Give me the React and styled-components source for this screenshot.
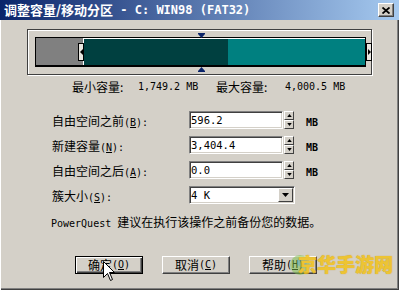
import React from "react";
import styled, { createGlobalStyle } from "styled-components";

const GlobalStyle = createGlobalStyle`
  html, body {
    margin: 0;
    padding: 0;
    background: #d4d0c8;
  }
  body {
    font-family: "Noto Sans CJK SC", sans-serif;
    font-size: 12px;
    color: #000;
  }
`;

const Window = styled.div`
  position: relative;
  width: 399px;
  height: 290px;
  overflow: hidden;
  box-sizing: border-box;
  background: #d4d0c8;
  box-shadow: inset 1px 0 0 #ffffff, inset -1px -1px 0 #404040,
    inset -2px -2px 0 #808080;
`;

const TitleBar = styled.div`
  height: 20px;
  display: flex;
  align-items: center;
  justify-content: space-between;
  padding: 0 5px 0 4px;
  background: linear-gradient(to right, #0a246a, #a6caf0);
  color: #fff;
  font-weight: bold;
  font-size: 13px;
  line-height: 20px;
`;

const Title = styled.div`
  display: flex;
  align-items: center;
  white-space: pre;
`;

const Mono = styled.span`
  font-family: "DejaVu Sans Mono", "Liberation Mono", monospace;
  font-size: ${(p) => p.$size || 10}px;
  font-weight: ${(p) => (p.$bold ? "bold" : "normal")};
`;

const U = styled.span`
  text-decoration: underline;
`;

const CloseButton = styled.div`
  width: 16px;
  height: 14px;
  box-sizing: border-box;
  background: #d4d0c8;
  border: 1px solid;
  border-color: #fff #404040 #404040 #fff;
  box-shadow: inset -1px -1px 0 #808080;
  display: flex;
  align-items: center;
  justify-content: center;
`;

const Frame = styled.div`
  position: relative;
  margin: 9px 0 0 27px;
  width: 345px;
  height: 46px;
  box-sizing: border-box;
  border: 1px solid #404040;
  box-shadow: 1px 1px 0 #fff, inset 1px 1px 0 #fff;
  padding: 7px 0 0 7px;
`;

const Bar = styled.div`
  display: flex;
  width: 331px;
  height: 30px;
  box-sizing: border-box;
  border: 1px solid #000;
  border-bottom-width: 2px;
`;

const FreeSeg = styled.div`
  width: 47px;
  background: #808080;
`;

const PartSeg = styled.div`
  flex: 1;
  display: flex;
  border-top: 1px solid #fff;
  border-left: 1px solid #fff;
`;

const Fill = styled.div`
  width: ${(p) => (p.$w ? `${p.$w}px` : "auto")};
  flex: ${(p) => (p.$w ? "none" : 1)};
  background: ${(p) => p.$color};
`;

const Handle = styled.div`
  position: absolute;
  top: 13px;
  left: ${(p) => p.$left}px;
  width: 6px;
  height: 18px;
  box-sizing: border-box;
  border: 1px solid #000;
  background: #e8e6e0;
  display: flex;
  align-items: center;
  justify-content: center;
`;

const Marker = styled.svg`
  position: absolute;
  left: 170px;
  top: ${(p) => p.$top}px;
`;

const StatRow = styled.div`
  display: flex;
  margin-top: 6px;
  padding-left: 72px;
  line-height: 12px;
  height: 12px;
`;

const Stat = styled.div`
  display: flex;
  align-items: center;
  width: 144px;
`;

const StatLabel = styled.span`
  width: ${(p) => p.$w}px;
`;

const FormGrid = styled.div`
  display: grid;
  margin-top: 18px;
  padding-left: 52px;
  grid-template-columns: 137px 94px 12px 1fr;
  grid-auto-rows: 18px;
  row-gap: 7px;
  align-items: center;
`;

const Label = styled.div`
  line-height: 12px;
  padding-top: 3px;
`;

const Field = styled.div`
  grid-column: ${(p) => p.$span || "auto"};
  height: 18px;
  box-sizing: border-box;
  background: #fff;
  border: 1px solid;
  border-color: #808080 #fff #fff #808080;
  box-shadow: inset 1px 1px 0 #404040, inset -1px -1px 0 #d4d0c8;
  padding: 0 0 0 1px;
  display: flex;
  align-items: center;
  justify-content: space-between;
  font-family: "DejaVu Sans Mono", "Liberation Mono", monospace;
  font-size: 10.5px;
`;

const Spinner = styled.div`
  margin-left: 1px;
  width: 10px;
  height: 18px;
  display: flex;
  flex-direction: column;
`;

const SpinBtn = styled.div`
  height: 9px;
  box-sizing: border-box;
  background: #d4d0c8;
  border: 1px solid;
  border-color: #fff #404040 #404040 #fff;
  display: flex;
  align-items: center;
  justify-content: center;
`;

const Unit = styled.div`
  margin-left: 11px;
  align-self: end;
  font-family: "DejaVu Sans Mono", "Liberation Mono", monospace;
  font-size: 10px;
  font-weight: bold;
  line-height: 12px;
`;

const DropBtn = styled.div`
  width: 15px;
  height: 14px;
  margin-right: 1px;
  box-sizing: border-box;
  background: #d4d0c8;
  border: 1px solid;
  border-color: #fff #404040 #404040 #fff;
  display: flex;
  align-items: center;
  justify-content: center;
`;

const Hint = styled.div`
  margin-top: 12px;
  padding-left: 51px;
  line-height: 12px;
`;

const ButtonRow = styled.div`
  display: flex;
  gap: 19px;
  margin-top: 26px;
  padding-left: 75px;
`;

const Button = styled.div`
  width: 68px;
  height: 18px;
  box-sizing: border-box;
  background: #d4d0c8;
  border: 1px solid;
  border-color: ${(p) => (p.$default ? "#000" : "#fff #404040 #404040 #fff")};
  box-shadow: ${(p) =>
    p.$default
      ? "inset 1px 1px 0 #fff, inset -1px -1px 0 #404040, inset -2px -2px 0 #808080"
      : "inset -1px -1px 0 #808080"};
  display: flex;
  align-items: center;
  justify-content: center;
  line-height: 12px;
`;

const Cursor = styled.svg`
  position: absolute;
  left: 103px;
  top: 261px;
`;

const Watermark = styled.div`
  position: absolute;
  left: 288px;
  top: 252px;
  display: flex;
  align-items: center;
  white-space: nowrap;
  opacity: 0.85;
`;

const WaterLogo = styled.svg`
  margin-right: -14px;
`;

const WaterText = styled.span`
  font-family: "Noto Sans CJK SC", sans-serif;
  font-weight: 900;
  font-size: 19px;
  line-height: 24px;
  color: #f2c21a;
  text-shadow: 0 0 1px #c89a10;
`;

const Arrow = ({ dir }) => {
  const pts = {
    up: "0,4 3,0 6,4",
    down: "0,0 3,4 6,0",
  };
  return (
    <svg width="5" height="3" viewBox="0 0 6 4">
      <polygon points={pts[dir]} fill="#000" />
    </svg>
  );
};

const FieldRow = ({ label, mnemonic, value }) => (
  <>
    <Label>
      {label}
      <Mono>
        (<U>{mnemonic}</U>):
      </Mono>
    </Label>
    <Field>{value}</Field>
    <Spinner>
      <SpinBtn>
        <Arrow dir="up" />
      </SpinBtn>
      <SpinBtn>
        <Arrow dir="down" />
      </SpinBtn>
    </Spinner>
    <Unit>MB</Unit>
  </>
);

export default function App() {
  return (
    <>
      <GlobalStyle />
      <Window>
        <TitleBar>
          <Title>
            调整容量/移动分区
            <Mono $size={12} $bold>
              {" - C: WIN98 (FAT32)"}
            </Mono>
          </Title>
          <CloseButton>
            <svg width="8" height="7" viewBox="0 0 8 7">
              <path d="M0.5 0.5 L7.5 6.5 M7.5 0.5 L0.5 6.5" stroke="#000" strokeWidth="1.8" />
            </svg>
          </CloseButton>
        </TitleBar>

        <Frame>
          <Bar>
            <FreeSeg />
            <PartSeg>
              <Fill $w={144} $color="#004040" />
              <Fill $color="#008080" />
            </PartSeg>
          </Bar>
          <Handle $left={50}>
            <svg width="3" height="6" viewBox="0 0 3 6">
              <polygon points="3,0 0,3 3,6" fill="#000" />
            </svg>
          </Handle>
          <Handle $left={338}>
            <svg width="3" height="6" viewBox="0 0 3 6">
              <polygon points="0,0 3,3 0,6" fill="#000" />
            </svg>
          </Handle>
          <Marker $top={3} width="7" height="5" viewBox="0 0 7 5">
            <rect x="0" y="0" width="7" height="1" fill="#0a246a" />
            <polygon points="0,1 7,1 3.5,5" fill="#0a246a" />
          </Marker>
          <Marker $top={37} width="7" height="5" viewBox="0 0 7 5">
            <polygon points="3.5,0 7,4 0,4" fill="#0a246a" />
            <rect x="0" y="4" width="7" height="1" fill="#0a246a" />
          </Marker>
        </Frame>

        <StatRow>
          <Stat>
            <StatLabel $w={66}>最小容量:</StatLabel>
            <Mono>1,749.2 MB</Mono>
          </Stat>
          <Stat>
            <StatLabel $w={69}>最大容量:</StatLabel>
            <Mono>4,000.5 MB</Mono>
          </Stat>
        </StatRow>

        <FormGrid>
          <FieldRow label="自由空间之前" mnemonic="B" value="596.2" />
          <FieldRow label="新建容量" mnemonic="N" value="3,404.4" />
          <FieldRow label="自由空间之后" mnemonic="A" value="0.0" />
          <Label>
            簇大小
            <Mono>
              (<U>S</U>):
            </Mono>
          </Label>
          <Field $span="2 / 4">
            4 K
            <DropBtn>
              <svg width="7" height="4" viewBox="0 0 7 4">
                <polygon points="0,0 7,0 3.5,4" fill="#000" />
              </svg>
            </DropBtn>
          </Field>
        </FormGrid>

        <Hint>
          <Mono>PowerQuest </Mono>建议在执行该操作之前备份您的数据。
        </Hint>

        <ButtonRow>
          <Button $default>
            确定
            <Mono>
              (<U>O</U>)
            </Mono>
          </Button>
          <Button>
            取消
            <Mono>
              (<U>C</U>)
            </Mono>
          </Button>
          <Button>
            帮助
            <Mono>
              (<U>H</U>)
            </Mono>
          </Button>
        </ButtonRow>

        <Watermark>
          <WaterLogo width="24" height="24" viewBox="0 0 24 24">
            <circle cx="12" cy="13" r="10" fill="#7cc04a" opacity="0.6" />
            <circle cx="14" cy="10" r="5" fill="#4aa0d8" opacity="0.5" />
          </WaterLogo>
          <WaterText>京华手游网</WaterText>
        </Watermark>

        <Cursor width="12" height="21" viewBox="0 0 12 21">
          <path
            d="M0.5 0.5 L0.5 16.5 L4.5 12.5 L7.5 19.5 L9.5 18.5 L6.5 11.5 L11.5 11.5 Z"
            fill="#fff"
            stroke="#000"
            strokeWidth="1"
          />
        </Cursor>
      </Window>
    </>
  );
}
